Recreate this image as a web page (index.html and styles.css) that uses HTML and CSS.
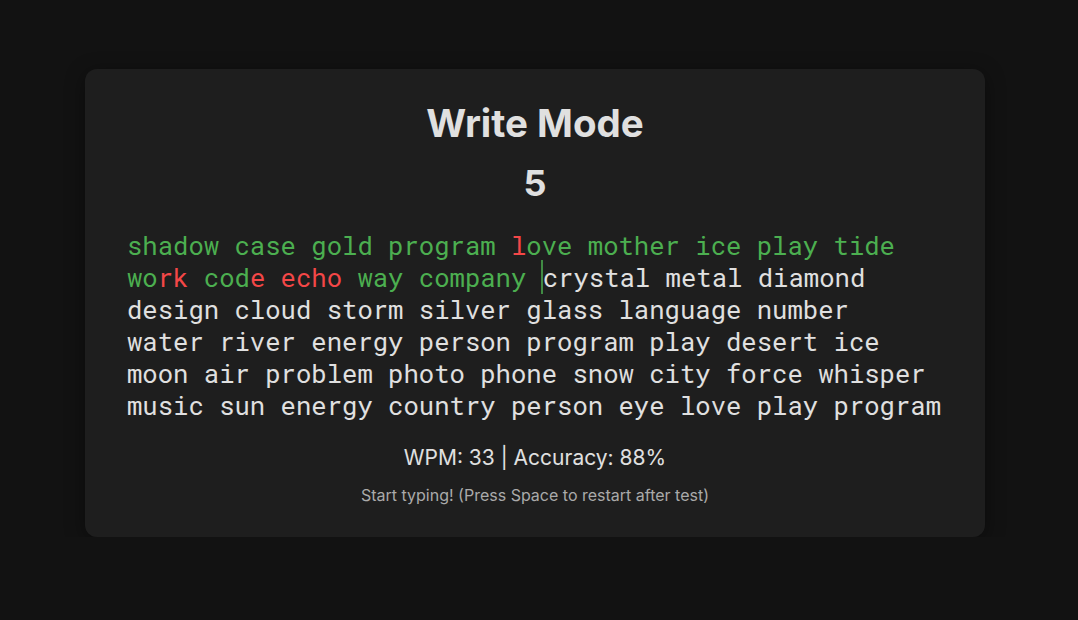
FILE: index.html
```html
<!DOCTYPE html>
<html lang="en">
<head>
<meta charset="utf-8">
<title>Write Mode</title>
<link rel="stylesheet" href="styles.css">
</head>
<body>
<main class="card">
  <h1 class="title">Write Mode</h1>
  <div class="timer">5</div>
  <div class="words">
    <span class="word"><span class="ok">shadow </span></span><span class="word"><span class="ok">case </span></span><span class="word"><span class="ok">gold </span></span><span class="word"><span class="ok">program </span></span><span class="word"><span class="bad">l</span><span class="ok">ove </span></span><span class="word"><span class="ok">mother </span></span><span class="word"><span class="ok">ice </span></span><span class="word"><span class="ok">play </span></span><span class="word"><span class="ok">tide </span></span><span class="word"><span class="ok">wo</span><span class="bad">rk</span><span class="ok"> </span></span><span class="word"><span class="ok">cod</span><span class="bad">e</span><span class="ok"> </span></span><span class="word"><span class="bad">echo</span><span class="ok"> </span></span><span class="word"><span class="ok">way </span></span><span class="word"><span class="ok">company </span></span><span class="word"><span class="current">c</span>rystal </span><span class="word">metal </span><span class="word">diamond </span><span class="word">design </span><span class="word">cloud </span><span class="word">storm </span><span class="word">silver </span><span class="word">glass </span><span class="word">language </span><span class="word">number </span><span class="word">water </span><span class="word">river </span><span class="word">energy </span><span class="word">person </span><span class="word">program </span><span class="word">play </span><span class="word">desert </span><span class="word">ice </span><span class="word">moon </span><span class="word">air </span><span class="word">problem </span><span class="word">photo </span><span class="word">phone </span><span class="word">snow </span><span class="word">city </span><span class="word">force </span><span class="word">whisper </span><span class="word">music </span><span class="word">sun </span><span class="word">energy </span><span class="word">country </span><span class="word">person </span><span class="word">eye </span><span class="word">love </span><span class="word">play </span><span class="word">program</span>
  </div>
  <div class="stats">WPM: 33 | Accuracy: 88%</div>
  <p class="hint">Start typing! (Press Space to restart after test)</p>
</main>
</body>
</html>
```
FILE: styles.css
```css
html, body {
  margin: 0;
  padding: 0;
  background: #121212;
}

body {
  padding: 69px 0 0 85px;
  font-family: Inter, "Noto Sans", sans-serif;
  color: #e0e0e0;
}

.card {
  width: 900px;
  box-sizing: border-box;
  background: #1e1e1e;
  border-radius: 12px;
  padding: 32px 42px;
  box-shadow: 0 4px 20px rgba(0, 0, 0, 0.4);
  text-align: center;
}

.title {
  margin: 0;
  font-size: 38.5px;
  line-height: 44px;
  font-weight: 700;
  color: #e0e0e0;
}

.timer {
  margin-top: 16px;
  font-size: 36px;
  line-height: 44px;
  font-weight: 700;
  color: #e0e0e0;
}

.words {
  margin-top: 24px;
  text-align: left;
  font-family: "Roboto Mono", "DejaVu Sans Mono", "Liberation Mono", monospace;
  font-size: 25.6px;
  line-height: 32px;
  color: #e0e0e0;
}

.word {
  display: inline-block;
  white-space: pre;
}

.ok {
  color: #4caf50;
}

.bad {
  color: #f44747;
}

.current {
  border-left: 2px solid rgba(76, 175, 80, 0.75);
  margin-left: -1px;
}

.stats {
  margin-top: 24px;
  font-size: 21px;
  line-height: 25px;
  color: #e0e0e0;
}

.hint {
  margin: 16px 0 0;
  font-size: 16px;
  line-height: 19px;
  color: #aaaaaa;
}
```
